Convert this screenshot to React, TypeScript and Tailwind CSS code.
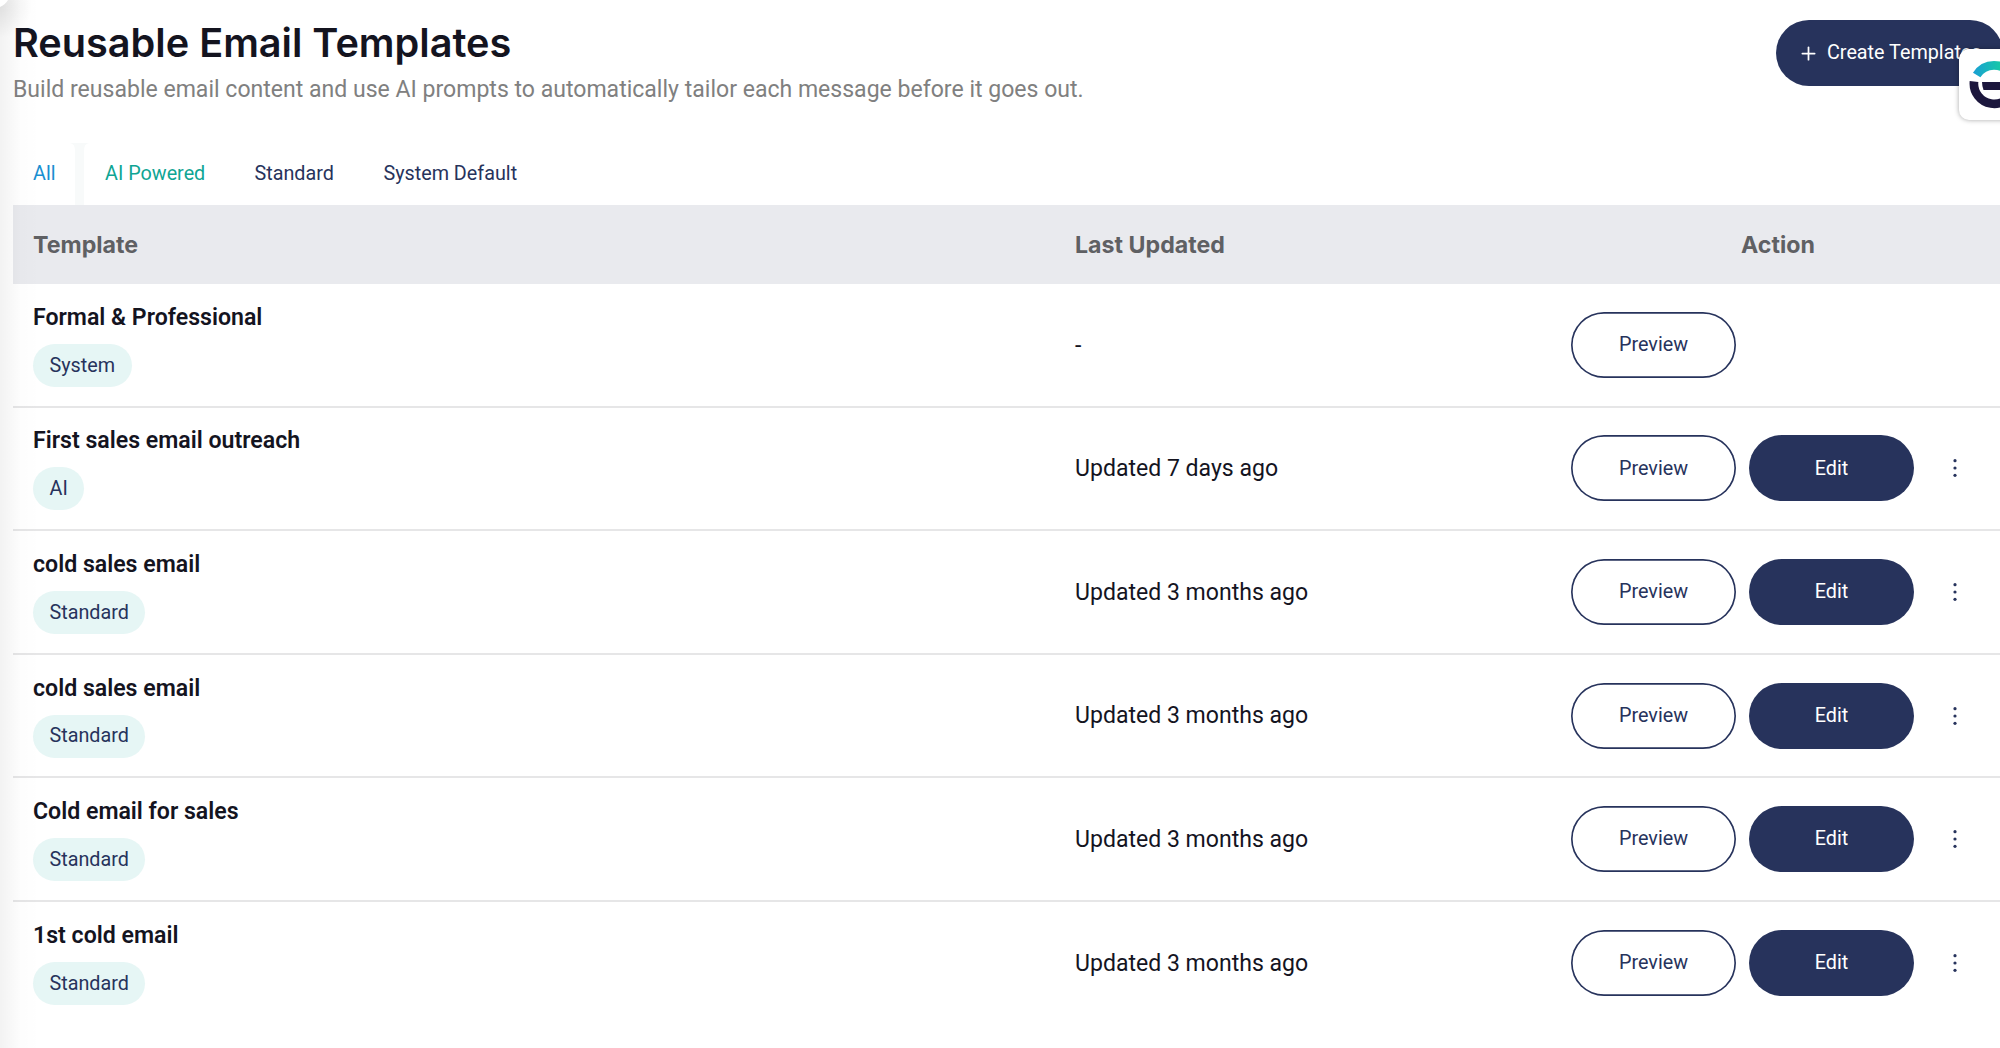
import { Plus } from "lucide-react";

interface Template {
  name: string;
  type: string;
  updated: string;
  editable: boolean;
}

const templates: Template[] = [
  { name: "Formal & Professional", type: "System", updated: "-", editable: false },
  { name: "First sales email outreach", type: "AI", updated: "Updated 7 days ago", editable: true },
  { name: "cold sales email", type: "Standard", updated: "Updated 3 months ago", editable: true },
  { name: "cold sales email", type: "Standard", updated: "Updated 3 months ago", editable: true },
  { name: "Cold email for sales", type: "Standard", updated: "Updated 3 months ago", editable: true },
  { name: "1st cold email", type: "Standard", updated: "Updated 3 months ago", editable: true },
];

export default function App() {
  return (
    <div className="relative h-[1048px] w-[2000px] overflow-hidden bg-white pl-[13px] font-['Roboto',sans-serif] text-[#14141f]">
      {/* Header */}
      <header className="flex h-[142.6px] items-start justify-between">
        <div>
          <h1 className="mt-[19px] font-['Inter',sans-serif] text-[39.65px] leading-[48px] font-semibold whitespace-nowrap">
            Reusable Email Templates
          </h1>
          <p className="mt-[6px] text-[23.06px] leading-[33px] whitespace-nowrap text-[#808080]">
            Build reusable email content and use AI prompts to automatically tailor each message before it goes out.
          </p>
        </div>
        <button
          type="button"
          className="mt-5 -mr-[3px] flex h-[66px] w-[227px] shrink-0 items-center rounded-full bg-[#27335c] pl-[22px] text-[19.77px] whitespace-nowrap text-white"
        >
          <Plus className="mr-[8px] size-[21px] shrink-0" strokeWidth={2} />
          Create Templates
        </button>
      </header>

      {/* Tabs */}
      <nav className="flex h-[62px] text-[19.77px] leading-[61px] whitespace-nowrap text-[#27335c]">
        <button type="button" className="w-[57px] pl-5 text-left text-[#1a8fd1]">All</button>
        <svg width="19" height="62" viewBox="0 0 19 62" fill="#f8fafa">
          <path d="M0 0H19Q14 1 14 7V62H5V7Q5 1 0 0Z" />
        </svg>
        <button type="button" className="w-[145px] pl-4 text-left text-[#0fa594]">AI Powered</button>
        <button type="button" className="w-[129px] pl-[20.5px] text-left">Standard</button>
        <button type="button" className="w-[180px] pl-[20.4px] text-left">System Default</button>
      </nav>

      {/* Table */}
      <div className="flex h-[79px] items-center bg-[#e9eaee] pt-[2px] pl-5 font-['Inter',sans-serif] text-[23.2px] font-bold text-[#5f6063]">
        <div className="w-[1042px]">Template</div>
        <div className="w-[666px]">Last Updated</div>
        <div>Action</div>
      </div>
      {templates.map((template, index) => (
        <TemplateRow key={index} template={template} last={index === templates.length - 1} />
      ))}

      {/* Drawer edge */}
      <div className="pointer-events-none absolute inset-y-0 left-0 w-10 bg-linear-to-r from-black/5 via-black/1 to-transparent" />
      <svg className="pointer-events-none absolute top-0 left-0" width="40" height="40" viewBox="0 0 40 40">
        <defs>
          <radialGradient id="corner" cx="0" cy="6" r="32" gradientUnits="userSpaceOnUse">
            <stop stopColor="#000" stopOpacity="0.08" />
            <stop offset="1" stopColor="#000" stopOpacity="0" />
          </radialGradient>
        </defs>
        <rect width="40" height="40" fill="url(#corner)" />
        <path d="M0 0H8Q5 5 0 7Z" fill="#fff" />
      </svg>
      <FloatingLogo />
    </div>
  );
}

function TemplateRow({ template, last }: { template: Template; last: boolean }) {
  return (
    <div className="relative flex h-[123.6px] items-center pl-5">
      <div className="flex w-[1042px] flex-col items-start pb-[3px]">
        <div className="text-[23.12px] leading-[33px] font-semibold">{template.name}</div>
        <span className="mt-[10px] flex h-[43px] items-center rounded-full bg-[#e6f6f5] px-[16.5px] text-[19.77px] text-[#27335c]">
          {template.type}
        </span>
      </div>
      <div className="w-[496px] pt-px text-[23.06px]">{template.updated}</div>
      <div className="flex items-center gap-[13px] pb-px text-[19.77px]">
        <button
          type="button"
          className="h-[66px] w-[165px] rounded-full text-[#27335c] shadow-[inset_0_0_0_1.65px_#27335c]"
        >
          Preview
        </button>
        {template.editable && (
          <>
            <button type="button" className="h-[66px] w-[165px] rounded-full bg-[#27335c] text-white">
              Edit
            </button>
            <button type="button" className="ml-[18px]" aria-label="More">
              <svg width="20" height="20" viewBox="0 0 20 20" fill="#27335c">
                <circle cx="10" cy="2.7" r="1.6" />
                <circle cx="10" cy="10" r="1.6" />
                <circle cx="10" cy="17.3" r="1.6" />
              </svg>
            </button>
          </>
        )}
      </div>
      {!last && <div className="absolute inset-x-0 bottom-[-0.4px] h-[2px] bg-[#e6e6e7]" />}
    </div>
  );
}

function FloatingLogo() {
  return (
    <div className="absolute top-[49px] left-[1959px] h-[71px] w-[60px] rounded-[10px] bg-white shadow-[0_0_5px_rgba(0,0,0,0.35)]">
      <svg className="absolute top-0 left-0" width="60" height="71" viewBox="0 0 60 71" fill="none">
        <defs>
          <linearGradient id="arc" x1="14" y1="0" x2="46" y2="0" gradientUnits="userSpaceOnUse">
            <stop stopColor="#1a9fd4" />
            <stop offset="1" stopColor="#17cfa0" />
          </linearGradient>
        </defs>
        <path d="M17.7 26A20.3 20.3 0 0 1 52.3 26" stroke="url(#arc)" strokeWidth="8.7" />
        <path d="M15 32.5A20.3 20.3 0 0 0 55 39" stroke="#1c173d" strokeWidth="8.7" />
        <path d="M23 33H60V41H24.5Q23 37 23 33Z" fill="#1c173d" />
      </svg>
    </div>
  );
}
